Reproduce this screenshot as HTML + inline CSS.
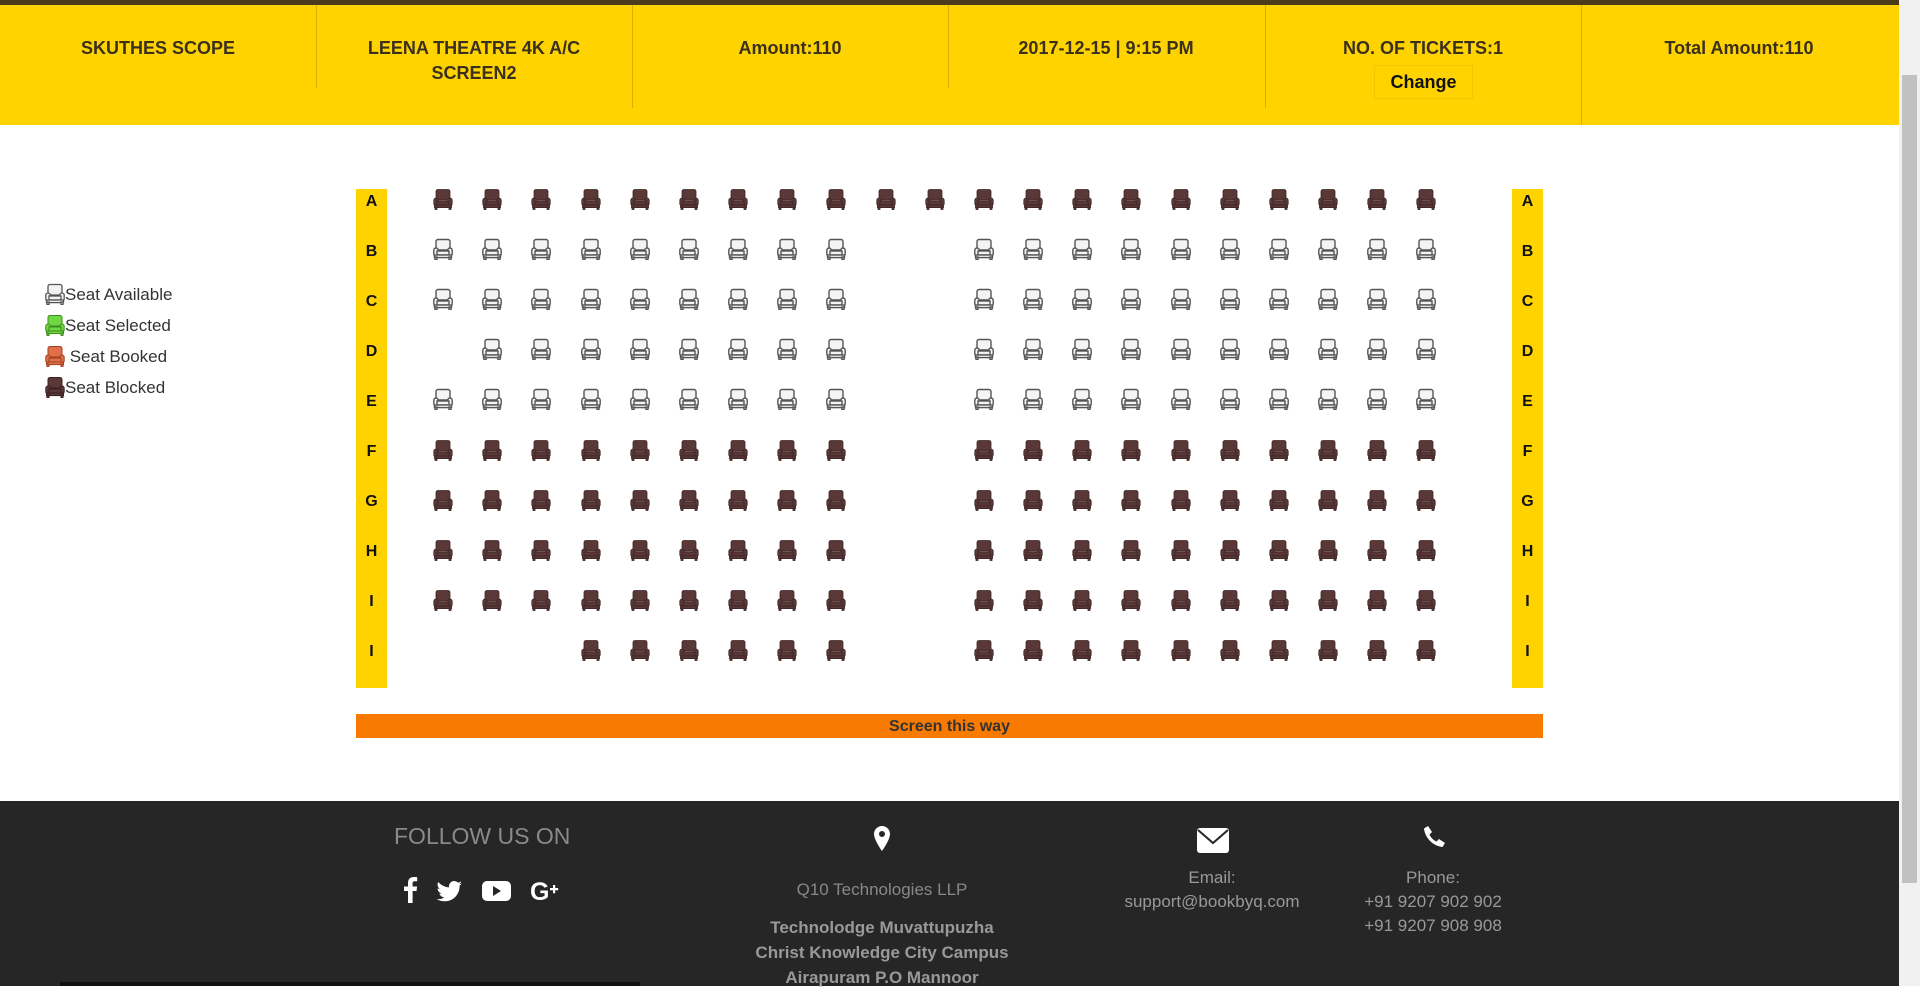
<!DOCTYPE html>
<html><head><meta charset="utf-8">
<style>
*{margin:0;padding:0;box-sizing:border-box}
html,body{width:1920px;height:986px;overflow:hidden;background:#fff;font-family:"Liberation Sans",Arial,sans-serif}
#top{position:absolute;left:0;top:0;width:1899px;height:5px;background:#4a3c1c}
#hdr{position:absolute;left:0;top:5px;width:1899px;height:120px;background:#FFD300}
.col{position:absolute;top:0;width:316px;text-align:center;font-weight:bold;font-size:18px;color:#3a301c;line-height:25px;padding-top:31px}
.div{position:absolute;top:0;width:1px;background:#d6b000}
#chg{position:absolute;left:1374px;top:60px;width:99px;height:34px;border:1px solid #f0c800;text-align:center;line-height:33px;font-weight:bold;font-size:18px;color:#111}
.bar{position:absolute;top:189px;width:31px;height:499px;background:#FFD300}
.lbl{position:absolute;width:31px;text-align:center;font-weight:bold;font-size:16px;color:#111}
svg.seat{position:absolute;width:20px;height:22px}
#screen{position:absolute;left:356px;top:714px;width:1187px;height:24px;background:#F97A00;text-align:center;font-weight:bold;font-size:16px;line-height:26px;color:#333}
.leg{position:absolute;left:45px;font-size:17px;color:#333;height:22px;line-height:24px}
.leg svg{position:relative;width:20px;height:22px;vertical-align:top}
#foot{position:absolute;left:0;top:801px;width:1899px;height:185px;background:#262626;color:#999}
.ft{position:absolute;text-align:center;font-size:17px;white-space:nowrap}
#sb{position:absolute;left:1899px;top:0;width:21px;height:986px;background:#f1f1f1}
#thumb{position:absolute;left:1902px;top:75px;width:15px;height:808px;background:#c1c1c1}
</style></head><body>
<svg width="0" height="0" style="position:absolute">
<defs>
<symbol id="st" viewBox="0 0 20 22">
<path d="M5 1.5h10a2 2 0 0 1 2 2V12H3V3.5a2 2 0 0 1 2-2z"/>
<rect x="0.8" y="10" width="4.4" height="8" rx="2.2"/>
<rect x="14.8" y="10" width="4.4" height="8" rx="2.2"/>
<rect x="4" y="13" width="12" height="4"/>
<rect x="1.5" y="17" width="17" height="2.6"/>
<rect x="2" y="19" width="2" height="2.5"/><rect x="16" y="19" width="2" height="2.5"/>
</symbol>
</defs></svg>
<div id="top"></div>
<div id="hdr">
<div class="col" style="left:0">SKUTHES SCOPE</div>
<div class="div" style="left:316px;height:83px"></div>
<div class="col" style="left:316px">LEENA THEATRE 4K A/C<br>SCREEN2</div>
<div class="div" style="left:632px;height:103px"></div>
<div class="col" style="left:632px">Amount:110</div>
<div class="div" style="left:948px;height:83px"></div>
<div class="col" style="left:948px">2017-12-15 | 9:15 PM</div>
<div class="div" style="left:1265px;height:103px"></div>
<div class="col" style="left:1265px">NO. OF TICKETS:1</div>
<div id="chg">Change</div>
<div class="div" style="left:1581px;height:120px"></div>
<div class="col" style="left:1581px">Total Amount:110</div>
</div>

<div class="leg" style="top:283px"><svg fill="#f2f2f2" stroke="#555" stroke-width="1.3"><use href="#st"/></svg>Seat Available</div>
<div class="leg" style="top:314px"><svg fill="#6fd840" stroke="#3f8a20" stroke-width="1"><use href="#st"/></svg>Seat Selected</div>
<div class="leg" style="top:345px"><svg fill="#e0704a" stroke="#a04020" stroke-width="1"><use href="#st"/></svg>&nbsp;Seat Booked</div>
<div class="leg" style="top:376px"><svg fill="#5a3838" stroke="#3a2020" stroke-width="1"><use href="#st"/></svg>Seat Blocked</div>

<div class="bar" style="left:356px"></div>
<div class="bar" style="left:1512px"></div>
<div class="lbl" style="left:356px;top:193px">A</div><div class="lbl" style="left:1512px;top:193px">A</div>
<div class="lbl" style="left:356px;top:243px">B</div><div class="lbl" style="left:1512px;top:243px">B</div>
<div class="lbl" style="left:356px;top:293px">C</div><div class="lbl" style="left:1512px;top:293px">C</div>
<div class="lbl" style="left:356px;top:343px">D</div><div class="lbl" style="left:1512px;top:343px">D</div>
<div class="lbl" style="left:356px;top:393px">E</div><div class="lbl" style="left:1512px;top:393px">E</div>
<div class="lbl" style="left:356px;top:443px">F</div><div class="lbl" style="left:1512px;top:443px">F</div>
<div class="lbl" style="left:356px;top:493px">G</div><div class="lbl" style="left:1512px;top:493px">G</div>
<div class="lbl" style="left:356px;top:543px">H</div><div class="lbl" style="left:1512px;top:543px">H</div>
<div class="lbl" style="left:356px;top:593px">I</div><div class="lbl" style="left:1512px;top:593px">I</div>
<div class="lbl" style="left:356px;top:643px">I</div><div class="lbl" style="left:1512px;top:643px">I</div>
<div id="seats"></div>
<div id="screen">Screen this way</div>

<div id="foot">
<div class="ft" style="left:394px;top:22px;font-size:23px;color:#8a8a8a">FOLLOW US ON</div>
<svg style="position:absolute;left:400px;top:74px" width="170" height="30" viewBox="0 0 170 30" fill="#fff">
<path d="M8 28V16H4v-4.5h4V8c0-4 2.3-6 5.8-6 1.6 0 3 .1 3.4.2v4h-2.4c-1.9 0-2.2.9-2.2 2.2v3.1h4.5l-.6 4.5h-3.9V28z"/>
<path transform="translate(10 0)" d="M52 8.5c-1 .4-2 .7-3 .8 1.1-.7 1.9-1.7 2.300-2.9-1 .6-2.100 1-3.300 1.3a5.2 5.2 0 0 0-8.900 4.700c-4.300-.2-8.200-2.300-10.800-5.400-1.500 2.500-.6 5.600 1.600 7-.8 0-1.600-.3-2.300-.6 0 2.500 1.800 4.600 4.200 5.100-.8.2-1.600.2-2.400.1.7 2.100 2.600 3.600 4.900 3.600A10.500 10.500 0 0 1 26.600 24c2.300 1.500 5.100 2.300 8 2.300 9.700 0 15-8 15-15v-.7c1-.7 1.900-1.600 2.600-2.600z"/>
<rect x="82" y="6" width="29" height="20" rx="5"/><path d="M93 11v10l8-5z" fill="#262626"/>
<text x="130" y="25" font-family="Liberation Sans,sans-serif" font-weight="bold" font-size="25" fill="#fff">G</text>
<path d="M150 13h3v-3h2.200v3h3v2.200h-3v3H153v-3h-3z"/>
</svg>
<svg style="position:absolute;left:872px;top:24px" width="20" height="28" viewBox="0 0 20 28"><path d="M10 1a8 8 0 0 0-8 8c0 6 8 17 8 17s8-11 8-17a8 8 0 0 0-8-8zm0 11a3 3 0 1 1 0-6 3 3 0 0 1 0 6z" fill="#fff"/></svg>
<div class="ft" style="left:782px;width:200px;top:79px;color:#888">Q10 Technologies LLP</div>
<div class="ft" style="left:732px;width:300px;top:114px;font-weight:bold;line-height:25px">Technolodge Muvattupuzha<br>Christ Knowledge City Campus<br>Airapuram P.O Mannoor</div>
<svg style="position:absolute;left:1197px;top:27px" width="32" height="25" viewBox="0 0 32 25"><rect x="0" y="0" width="32" height="25" rx="3" fill="#fff"/><path d="M1 2l15 13L31 2" fill="none" stroke="#262626" stroke-width="2"/></svg>
<div class="ft" style="left:1112px;width:200px;top:65px;line-height:24px">Email:<br>support@bookbyq.com</div>
<svg style="position:absolute;left:1422px;top:24px" width="24" height="24" viewBox="0 0 24 24"><path d="M6 1l4 6-2.500 2.500c1.200 3 3.800 5.600 7 7L17 14l6 4-2.500 4C11 21 3 13 2 3.500z" fill="#fff"/></svg>
<div class="ft" style="left:1333px;width:200px;top:65px;line-height:24px">Phone:<br>+91 9207 902 902<br>+91 9207 908 908</div>
</div>
<div style="position:absolute;left:60px;top:982px;width:580px;height:4px;background:#111"></div>
<div id="sb"></div><div id="thumb"></div>
<script>
var rows=[
 "bbbbbbbbbbbbbbbbbbbbb",
 "aaaaaaaaa..aaaaaaaaaa",
 "aaaaaaaaa..aaaaaaaaaa",
 ".aaaaaaaa..aaaaaaaaaa",
 "aaaaaaaaa..aaaaaaaaaa",
 "bbbbbbbbb..bbbbbbbbbb",
 "bbbbbbbbb..bbbbbbbbbb",
 "bbbbbbbbb..bbbbbbbbbb",
 "bbbbbbbbb..bbbbbbbbbb",
 "...bbbbbb..bbbbbbbbbb"];
var h="";
for(var r=0;r<rows.length;r++)for(var c=0;c<21;c++){var t=rows[r][c];if(t==".")continue;
var x=(433+c*49.17).toFixed(1),y=188+r*50.1;
var st=t=="b"?'fill="#5a3838" stroke="#3d2424" stroke-width="0.8"':'fill="#f4f4f4" stroke="#555" stroke-width="1.4"';
h+='<svg class="seat" style="left:'+x+'px;top:'+y+'px" '+st+'><use href="#st"/></svg>';}
document.getElementById("seats").innerHTML=h;
</script>
</body></html>
